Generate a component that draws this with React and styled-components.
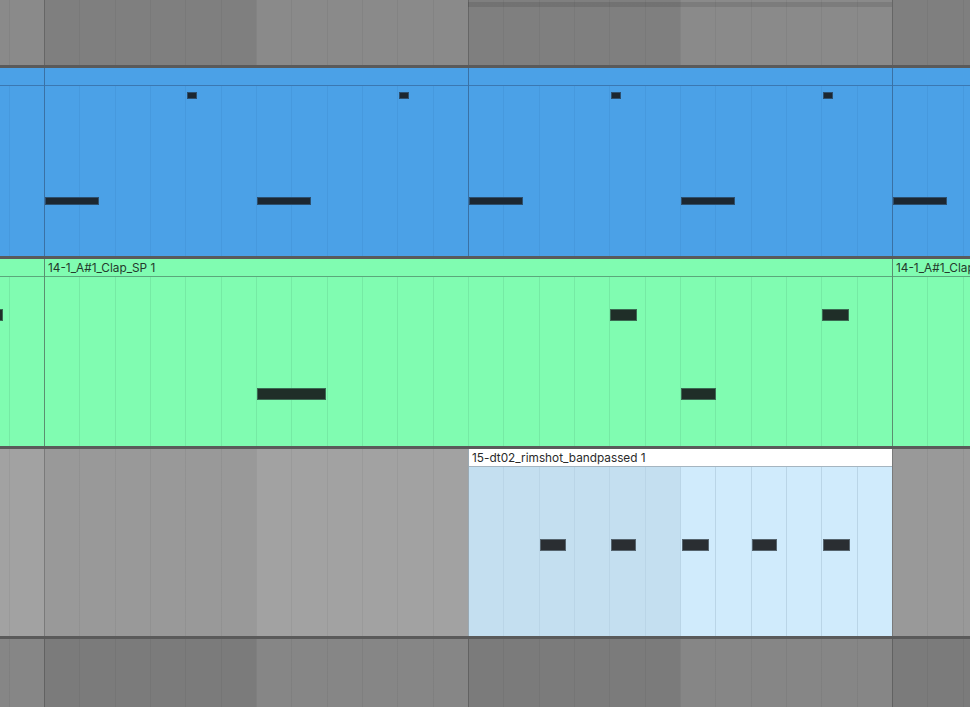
import styled, { createGlobalStyle, css } from "styled-components";

const BAR = 424;
const DIV = BAR / 12;
const ORIGIN = 44;

const mod = (a, m) => ((a % m) + m) % m;

const GlobalStyle = createGlobalStyle`
  html, body {
    margin: 0;
    padding: 0;
    background: #888888;
    overflow: hidden;
  }
  * {
    box-sizing: border-box;
  }
`;

// grid lines + half-bar shading, lined up with page x so every piece matches
const gridBg = ({ $x = 0, $base, $alt, $line, $bar, $marker }) => {
  const d = mod(ORIGIN - $x, DIV);
  const b = mod(ORIGIN - $x, BAR) - BAR;
  const layers = [];
  if ($marker) {
    layers.push(
      `linear-gradient(to bottom, transparent 2px, ${$marker} 2px 7px, transparent 7px)`
    );
  }
  if ($bar) {
    layers.push(
      `repeating-linear-gradient(to right, ${$bar} ${b}px ${b + 1}px, transparent ${b + 1}px ${b + BAR}px)`
    );
  }
  layers.push(
    `repeating-linear-gradient(to right, ${$line} ${d}px ${d + 1}px, transparent ${d + 1}px ${d + DIV}px)`
  );
  layers.push(
    `repeating-linear-gradient(to right, ${$alt || $base} ${b}px ${b + BAR / 2}px, ${$base} ${b + BAR / 2}px ${b + BAR}px)`
  );
  return css`
    background-color: ${$base};
    background-image: ${layers.join(", ")};
  `;
};

const Arrangement = styled.div`
  width: 970px;
  height: 707px;
  display: flex;
  flex-direction: column;
  overflow: hidden;
  font-family: Inter, "Liberation Sans", Arial, sans-serif;
`;

const Separator = styled.div`
  height: 3px;
  flex: none;
  background: #5a5a5a;
`;

const Track = styled.div`
  display: flex;
  height: ${(p) => p.$h}px;
  flex: none;
  overflow: hidden;
`;

const LaneSegment = styled.div`
  width: ${(p) => p.$w}px;
  flex: none;
  height: 100%;
  ${gridBg}
`;

const Clip = styled.div`
  width: ${(p) => p.$w}px;
  flex: none;
  display: flex;
  flex-direction: column;
  border-left: ${(p) => (p.$edge ? `1px solid ${p.$edge}` : "none")};
`;

const ClipHeader = styled.div`
  height: 18px;
  flex: none;
  display: flex;
  align-items: center;
  padding-left: 3px;
  background: ${(p) => p.$bg};
  border-bottom: 1px solid ${(p) => p.$rule};
  color: ${(p) => p.$ink || "#24392c"};
  font-size: 11.8px;
  white-space: nowrap;
  overflow: hidden;
`;

const ClipBody = styled.div`
  flex: 1;
  position: relative;
  overflow: hidden;
  ${gridBg}
`;

const Note = styled.div`
  position: absolute;
  background: ${(p) => p.$fill};
  box-shadow: inset 0 0 0 1px ${(p) => p.$rim};
`;

const BLUE = {
  $base: "#4ba1e7",
  $line: "#4699de",
  header: "#4ba1e7",
  rule: "#3b78b2",
  edge: "#3a71a5",
  fill: "#1c2731",
  rim: "#2d4f6e",
};

const GREEN = {
  $base: "#80fcb1",
  $line: "#75eaa4",
  header: "#80fcb1",
  rule: "#5ba77c",
  edge: "#5a8f70",
  fill: "#1f2e28",
  rim: "#3b6a52",
};

const RIM = {
  $base: "#d0ebfc",
  $alt: "#c4dff0",
  $line: "#bad5e7",
  header: "#ffffff",
  rule: "#a6b5c0",
  edge: "#9aa9b3",
  fill: "#2a2e32",
  rim: "#56646e",
};

const blueSmall = [186.5, 398.5, 610.5, 822.5].map((x) => ({ x, w: 10, y: 6, h: 7 }));
const blueLong = [44.5, 257, 468.5, 681, 892.5].map((x) => ({ x, w: 54, y: 111, h: 8 }));
const blueNotes = [...blueSmall, ...blueLong];

const blueClips = [
  { x: 0, w: 44 },
  { x: 44, w: 424 },
  { x: 468, w: 424 },
  { x: 892, w: 78 },
];

const greenNotes = [
  { x: -24, w: 27, y: 32, h: 12 },
  { x: 610, w: 27, y: 32, h: 12 },
  { x: 822, w: 27, y: 32, h: 12 },
  { x: 257, w: 69, y: 111, h: 12 },
  { x: 681, w: 35, y: 111, h: 12 },
];

const greenClips = [
  { x: 0, w: 44 },
  { x: 44, w: 848, name: "14-1_A#1_Clap_SP 1" },
  { x: 892, w: 78, name: "14-1_A#1_Clap_SP 1" },
];

const rimNotes = [
  { x: 540, w: 26 },
  { x: 611, w: 25 },
  { x: 682, w: 27 },
  { x: 752, w: 25 },
  { x: 823, w: 27 },
].map((n) => ({ ...n, y: 72, h: 12 }));

const TOP_GRAY = { $base: "#8a8a8a", $alt: "#7f7f7f", $line: "rgba(0,0,0,0.05)", $bar: "rgba(0,0,0,0.16)" };
const MID_GRAY = { $base: "#a2a2a2", $alt: "#999999", $line: "rgba(0,0,0,0.05)", $bar: "rgba(0,0,0,0.16)" };
const LOW_GRAY = { $base: "#868686", $alt: "#7b7b7b", $line: "rgba(0,0,0,0.05)", $bar: "rgba(0,0,0,0.16)" };

function MidiClip({ clip, palette, notes }) {
  const bodyX = clip.x === 0 ? 0 : clip.x + 1;
  const end = clip.x + clip.w;
  const own = notes.filter((n) => n.x + n.w > clip.x && n.x < end);
  return (
    <Clip $w={clip.w} $edge={clip.x === 0 ? null : palette.edge}>
      <ClipHeader $bg={palette.header} $rule={palette.rule} $ink={palette.ink}>
        {clip.name}
      </ClipHeader>
      <ClipBody $x={bodyX} $base={palette.$base} $alt={palette.$alt} $line={palette.$line}>
        {own.map((n, i) => (
          <Note
            key={i}
            $fill={palette.fill}
            $rim={palette.rim}
            style={{ left: n.x - bodyX, top: n.y, width: n.w, height: n.h }}
          />
        ))}
      </ClipBody>
    </Clip>
  );
}

export default function App() {
  return (
    <>
      <GlobalStyle />
      <Arrangement>
        <Track $h={65}>
          <LaneSegment $w={468} $x={0} {...TOP_GRAY} />
          <LaneSegment $w={424} $x={468} {...TOP_GRAY} $marker="rgba(0,0,0,0.1)" />
          <LaneSegment $w={78} $x={892} {...TOP_GRAY} />
        </Track>
        <Separator />
        <Track $h={188}>
          {blueClips.map((c) => (
            <MidiClip key={c.x} clip={c} palette={BLUE} notes={blueNotes} />
          ))}
        </Track>
        <Separator />
        <Track $h={187}>
          {greenClips.map((c) => (
            <MidiClip key={c.x} clip={c} palette={GREEN} notes={greenNotes} />
          ))}
        </Track>
        <Separator />
        <Track $h={187}>
          <LaneSegment $w={468} $x={0} {...MID_GRAY} />
          <MidiClip
            clip={{ x: 468, w: 424, name: "15-dt02_rimshot_bandpassed 1" }}
            palette={{ ...RIM, ink: "#2a2a2a" }}
            notes={rimNotes}
          />
          <LaneSegment $w={78} $x={892} {...MID_GRAY} />
        </Track>
        <Separator />
        <Track $h={68}>
          <LaneSegment $w={970} $x={0} {...LOW_GRAY} />
        </Track>
      </Arrangement>
    </>
  );
}
